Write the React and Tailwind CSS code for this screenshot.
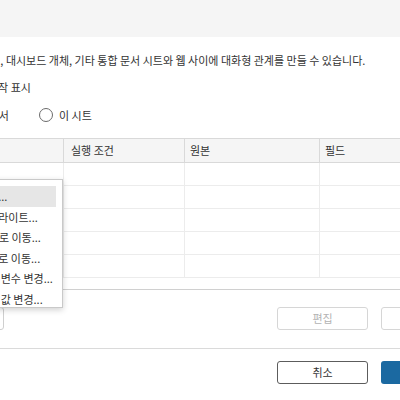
import React from 'react'

const font = { fontFamily: '"Noto Sans CJK KR", "Noto Sans", sans-serif' }

const menuItems = ['필터...', '하이라이트...', 'URL로 이동...', '시트로 이동...', '매개 변수 변경...', '집합 값 변경...']

function Row() {
  return (
    <div className="flex h-[23px] border-b border-[#ececec]">
      <div className="w-[104px] shrink-0 border-r border-[#ececec] ml-[-40px]" />
      <div className="w-[121px] shrink-0 border-r border-[#ececec]" />
      <div className="w-[135px] shrink-0 border-r border-[#ececec]" />
      <div className="w-[120px] shrink-0" />
    </div>
  )
}

export default function App() {
  return (
    <div className="relative w-[400px] h-[400px] overflow-hidden bg-white text-[#333] text-[11px]" style={font}>
      {/* header band */}
      <div className="h-[37px] bg-[#f5f5f5]" />

      <div className="mt-[11px] h-[24px] flex items-center whitespace-nowrap ml-[-30px]">
        데이터, 대시보드 개체, 기타 통합 문서 시트와 웹 사이에 대화형 관계를 만들 수 있습니다.
      </div>
      <div className="mt-[3px] h-[24px] flex items-center whitespace-nowrap ml-[-12px]">동작 표시</div>
      <div className="mt-[4px] h-[24px] flex items-center whitespace-nowrap ml-[-34px]">
        <span>통합 문서</span>
        <span className="ml-[30px] w-[14px] h-[14px] rounded-full border border-[#6b6b6b] bg-white" />
        <span className="ml-[6px]">이 시트</span>
      </div>

      {/* table */}
      <div className="mt-[11px] border-b border-[#d0d0d0] pb-[11px]">
        <div className="flex h-[25px] bg-[#f5f5f5] border-y border-[#d9d9d9]">
          <div className="w-[104px] shrink-0 border-r border-[#d9d9d9] ml-[-40px]" />
          <div className="w-[121px] shrink-0 border-r border-[#d9d9d9] flex items-center pl-[7px]">실행 조건</div>
          <div className="w-[135px] shrink-0 border-r border-[#d9d9d9] flex items-center pl-[5px]">원본</div>
          <div className="w-[120px] shrink-0 flex items-center pl-[5px]">필드</div>
        </div>
        <Row />
        <Row />
        <Row />
        <Row />
        <Row />
      </div>

      {/* action buttons */}
      <div className="mt-[17px] flex h-[23px]">
        <button className="shrink-0 w-[91px] ml-[-87px] rounded-[3px] border border-[#cfcfcf] bg-white" />
        <div className="shrink-0 w-[273px]" />
        <button className="shrink-0 w-[91px] rounded-[3px] border border-[#d6d6d6] bg-white text-[#b3b3b3]">편집</button>
        <button className="shrink-0 w-[91px] ml-[13px] rounded-[3px] border border-[#d6d6d6] bg-white text-[#b3b3b3]">삭제</button>
      </div>

      <div className="mt-[18px] border-t border-[#dadada]" />

      <div className="mt-[12px] flex h-[23px]">
        <div className="shrink-0 w-[277px]" />
        <button className="shrink-0 w-[91px] rounded-[3px] border border-[#5c5c5c] bg-white text-[#333]">취소</button>
        <button className="shrink-0 w-[91px] ml-[13px] rounded-[3px] bg-[#1b69a1] text-white">확인</button>
      </div>

      {/* dropdown menu */}
      <div className="absolute left-[-50px] top-[179px] w-[113px] h-[129px] bg-white border border-[#c9c9c9] shadow-[0_2px_6px_rgba(0,0,0,0.18)] pt-[6px]">
        {menuItems.map((item, i) => (
          <div
            key={item}
            className={
              'h-[20.6px] flex items-center whitespace-nowrap pl-[27px] mr-[6px] ' +
              (i === 0 ? 'bg-[#e6e6e6]' : '')
            }
          >
            {item}
          </div>
        ))}
      </div>
    </div>
  )
}
